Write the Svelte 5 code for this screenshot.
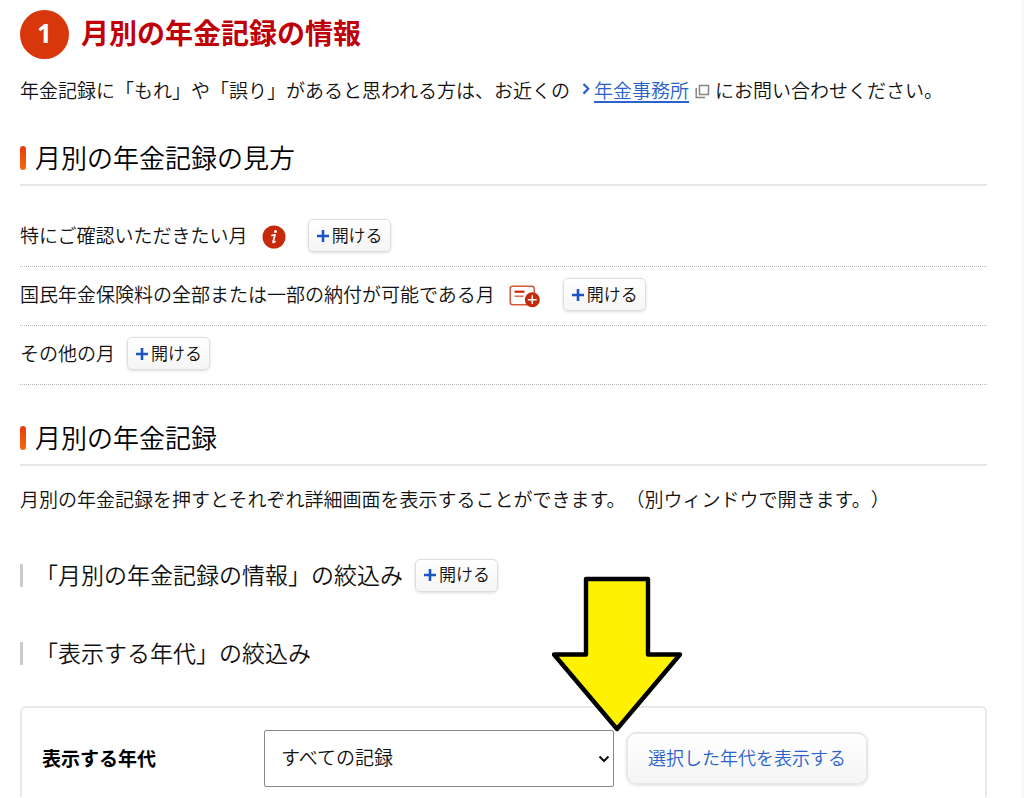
<script lang="ts">
	type Mark = 'info' | 'card' | null;

	const months: { label: string; mark: Mark }[] = [
		{ label: '特にご確認いただきたい月', mark: 'info' },
		{ label: '国民年金保険料の全部または一部の納付が可能である月', mark: 'card' },
		{ label: 'その他の月', mark: null }
	];

	let age = $state('all');
</script>

{#snippet openButton()}
	<button type="button" class="open">
		<svg width="12" height="12" viewBox="0 0 12 12" aria-hidden="true">
			<path d="M6 0v12M0 6h12" stroke="#1b55c4" stroke-width="2.6" />
		</svg>
		<span>開ける</span>
	</button>
{/snippet}

<main class="page">
	<h1><span class="step">1</span><span class="title">月別の年金記録の情報</span></h1>

	<p class="lead">
		<span>年金記録に「もれ」や「誤り」があると思われる方は、お近くの</span>
		<svg class="chevron" width="8" height="12" viewBox="0 0 8 12" aria-hidden="true">
			<path d="M1.5 1L6.3 5.8L1.5 10.6" fill="none" stroke="#2a62cc" stroke-width="2.2" />
		</svg>
		<a href="#office">年金事務所</a>
		<svg class="window" width="15" height="15" viewBox="0 0 15 15" aria-hidden="true">
			<path d="M4.5 1.5h9v9h-9zM1.2 4v9.5H10" fill="none" stroke="#858585" stroke-width="1.5" />
		</svg>
		<span>にお問い合わせください。</span>
	</p>

	<h2>月別の年金記録の見方</h2>
	<ul>
		{#each months as month}
			<li>
				<span>{month.label}</span>
				{#if month.mark === 'info'}
					<svg class="mark" width="24" height="24" viewBox="0 0 24 24" aria-hidden="true">
						<circle cx="12" cy="12" r="11.5" fill="#c52a0b" />
						<circle cx="13.5" cy="6.6" r="1.5" fill="#fff" />
						<path d="M10 10.4l3-.5l-2 7.2q0 1 2-.5" fill="none" stroke="#fff" stroke-width="1.7" stroke-linejoin="round" stroke-linecap="round" />
					</svg>
				{:else if month.mark === 'card'}
					<svg class="mark" width="32" height="24" viewBox="0 0 32 24" aria-hidden="true">
						<rect x="1.2" y="2.2" width="24" height="18.6" rx="2.5" fill="#fff" stroke="#d4573f" stroke-width="1.5" />
						<path d="M5.5 7.7h10" stroke="#c52a0b" stroke-width="2.2" />
						<path d="M5.5 12.2h9" stroke="#d4573f" stroke-width="1.3" />
						<circle cx="23.3" cy="15.7" r="7.5" fill="#c52a0b" />
						<path d="M23.3 11.3v8.8M18.9 15.7h8.8" stroke="#fff" stroke-width="1.5" />
					</svg>
				{/if}
				{@render openButton()}
			</li>
		{/each}
	</ul>

	<h2>月別の年金記録</h2>
	<p class="note">月別の年金記録を押すとそれぞれ詳細画面を表示することができます。（別ウィンドウで開きます。）</p>

	<h3><span>「月別の年金記録の情報」の絞込み</span>{@render openButton()}</h3>

	<div class="filter">
		<h3><span>「表示する年代」の絞込み</span></h3>

		<form>
			<label for="age">表示する年代</label>
			<div class="field">
				<select id="age" bind:value={age}>
					<option value="all">すべての記録</option>
				</select>
				<svg class="caret" width="12" height="8" viewBox="0 0 12 8" aria-hidden="true">
					<path d="M1.5 1.5L6 6L10.5 1.5" fill="none" stroke="#111" stroke-width="2" />
				</svg>
			</div>
			<button type="button" class="show">選択した年代を表示する</button>
		</form>

		<svg class="arrow" width="132" height="160" viewBox="0 0 132 160" aria-hidden="true">
			<path d="M34 4H96V79.5H128L65 154L2 79.5H34Z" fill="#fff200" stroke="#000" stroke-width="4.4" stroke-linejoin="round" />
		</svg>
	</div>
</main>

<style>
	:global(body) {
		margin: 0;
		background: #fff;
	}

	.page {
		box-sizing: border-box;
		min-height: 100vh;
		padding: 10px 34px 0 20px;
		border-right: 3px solid #f8f8f8;
		font-family: 'Noto Sans', 'Noto Sans CJK JP', sans-serif;
		font-size: 19px;
		font-weight: 350;
		line-height: 28px;
		text-spacing-trim: space-all;
		color: #111;
	}

	h1 {
		display: flex;
		align-items: center;
		gap: 12px;
		margin: 0;
		font-size: 28px;
		line-height: 48px;
		color: #bf0009;
	}

	.step {
		width: 49px;
		height: 49px;
		border-radius: 50%;
		background: #d8370b;
		color: #fff;
		text-align: center;
		font-size: 26px;
		line-height: 46px;
	}

	.title {
		padding-bottom: 4px;
		line-height: 44px;
	}

	.lead {
		display: flex;
		align-items: center;
		margin: 18px 0 0;
		white-space: nowrap;
	}

	.chevron {
		margin: 0 4px 4px 12px;
	}

	.window {
		margin: 0 5px 0 6px;
	}

	a {
		color: #2a62cc;
		text-underline-offset: 3px;
		text-decoration-thickness: 2px;
	}

	h2 {
		display: flex;
		align-items: center;
		gap: 9px;
		margin: 34px 0 0;
		padding-bottom: 7px;
		border-bottom: 2px solid #e6e6e6;
		font-size: 26px;
		font-weight: 350;
		line-height: 38px;
		color: #000;
	}

	h2::before {
		content: '';
		width: 6px;
		height: 24px;
		border-radius: 3px;
		background: linear-gradient(#e83a10, #f56a0c);
	}

	ul {
		list-style: none;
		margin: 22px 0 0;
		padding: 0;
	}

	li {
		display: flex;
		align-items: center;
		box-sizing: border-box;
		height: 59px;
		padding-bottom: 3px;
		border-bottom: 1px dotted #bdb9b0;
	}

	.mark {
		margin: 3px 10px 0 14px;
	}

	.open {
		display: inline-flex;
		align-items: center;
		justify-content: center;
		gap: 3px;
		box-sizing: border-box;
		height: 33px;
		margin-left: 12px;
		padding: 0 7px 0 8px;
		border: 1px solid #dedede;
		border-radius: 5px;
		background: linear-gradient(#fff, #f5f5f5);
		box-shadow: 0 1px 3px rgba(0, 0, 0, 0.14);
		font-family: inherit;
		font-size: 17px;
		font-weight: inherit;
		line-height: 24px;
		color: #111;
	}

	.note {
		margin: 20px 0 0;
		white-space: nowrap;
	}

	h3 {
		display: flex;
		align-items: center;
		min-height: 34px;
		margin: 44px 0 0;
		font-size: 23px;
		font-weight: 350;
		line-height: 34px;
	}

	h3::before {
		content: '';
		width: 3px;
		height: 23px;
		margin-right: 12px;
		background: #ccc;
	}

	.filter {
		position: relative;
	}

	form {
		display: grid;
		grid-template-columns: 222px minmax(0, 350px) auto;
		align-items: center;
		justify-content: start;
		margin-top: 36px;
		padding: 22px 20px 10px;
		border: 2px solid #e8e8e8;
		border-bottom: 0;
		border-radius: 6px 6px 0 0;
	}

	label {
		font-weight: 700;
		color: #000;
	}

	.field {
		position: relative;
	}

	select {
		appearance: none;
		width: 100%;
		height: 57px;
		padding: 0 30px 2px 16px;
		border: 1px solid #888;
		border-radius: 2px;
		background: #fff;
		font-family: inherit;
		font-size: 19px;
		font-weight: inherit;
		color: #111;
	}

	.caret {
		position: absolute;
		right: 4px;
		top: 50%;
		transform: translateY(-50%);
		pointer-events: none;
	}

	.show {
		height: 53px;
		margin-left: 12px;
		padding: 0 20px 4px;
		border: 2px solid #e8e8e8;
		border-radius: 10px;
		background: linear-gradient(#fff, #f5f5f5);
		box-shadow: 0 1px 3px rgba(0, 0, 0, 0.1);
		font-family: inherit;
		font-size: 18px;
		font-weight: inherit;
		color: #2a62cc;
	}

	/* The arrow lies over the form and points at the edge of the select */
	.arrow {
		position: absolute;
		left: 532px;
		bottom: 62px;
		pointer-events: none;
	}
</style>
